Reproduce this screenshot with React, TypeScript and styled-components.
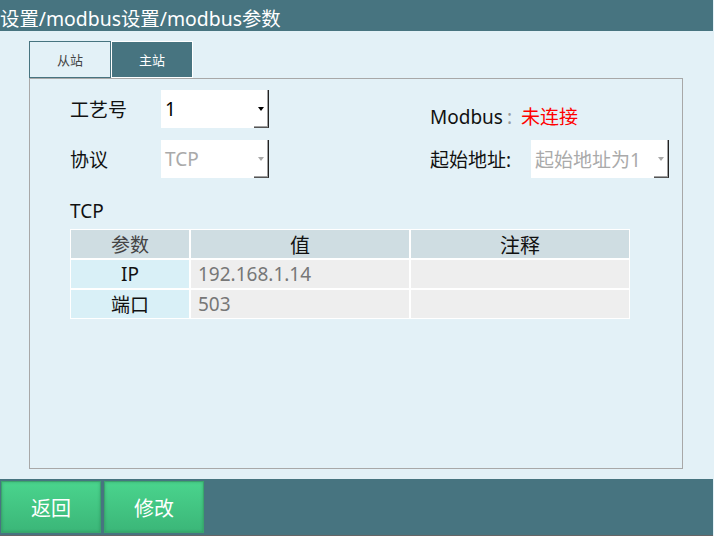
import React from "react";
import styled, { createGlobalStyle } from "styled-components";

const GlobalStyle = createGlobalStyle`
  html, body {
    margin: 0;
    padding: 0;
    background: #e3f1f7;
    font-family: "Noto Sans", "Noto Sans CJK SC", sans-serif;
  }
  * { box-sizing: border-box; }
`;

const TEAL = "#477480";

const Page = styled.div`
  width: 713px;
  height: 536px;
  display: flex;
  flex-direction: column;
`;

const TitleBar = styled.div`
  height: 31px;
  padding-top: 7px;
  background: ${TEAL};
  color: #fff;
  font-size: 19.4px;
  line-height: 24px;
  white-space: nowrap;
`;

const Content = styled.div`
  flex: 1;
  padding: 10px 30px 10px 29px;
  display: flex;
  flex-direction: column;
`;

const Tabs = styled.div`
  display: flex;
  height: 37px;
`;

const Tab = styled.div<{ $active?: boolean }>`
  width: 82px;
  height: 37px;
  display: flex;
  align-items: center;
  justify-content: center;
  font-size: 13px;
  border: 1px solid ${(p) => (p.$active ? "#ffffff" : TEAL)};
  background: ${(p) => (p.$active ? TEAL : "transparent")};
  color: ${(p) => (p.$active ? "#fff" : "#444")};
`;

const Panel = styled.div`
  height: 391px;
  border: 1px solid #a8a8a8;
  padding: 11px 0 0 40px;
`;

const TopSection = styled.div`
  display: flex;
`;

const Column = styled.div`
  display: flex;
  flex-direction: column;
  gap: 12px;
`;

const FormRow = styled.div`
  height: 38px;
  display: flex;
  align-items: center;
`;

const Label = styled.div<{ $width: number }>`
  width: ${(p) => p.$width}px;
  font-size: 19px;
  color: #111;
  white-space: nowrap;
`;

const StatusRow = styled.div`
  height: 38px;
  padding-top: 16px;
  font-size: 19px;
  line-height: 22px;
  color: #111;
  white-space: nowrap;
`;

const Colon = styled.span`
  color: #999;
  margin: 0 9px 0 4px;
`;

const Red = styled.span`
  color: #ff0000;
`;

const SelectBox = styled.div<{ $width: number }>`
  width: ${(p) => p.$width}px;
  height: 38px;
  background: #fff;
  display: flex;
`;

const SelectValue = styled.div<{ $disabled?: boolean }>`
  flex: 1;
  padding-left: 4px;
  display: flex;
  align-items: center;
  font-size: 19px;
  color: ${(p) => (p.$disabled ? "#aaaaaa" : "#000")};
  white-space: nowrap;
  overflow: hidden;
`;

const DropButton = styled.div<{ $disabled?: boolean }>`
  width: 15px;
  height: 100%;
  border-right: 1px solid #222;
  border-bottom: 1px solid #555;
  box-shadow: inset -1px -1px 0 #a0a0a0;
  display: flex;
  align-items: center;
  justify-content: center;
  padding-right: 1px;

  &::after {
    content: "";
    border-left: 3.5px solid transparent;
    border-right: 3.5px solid transparent;
    border-top: 4px solid ${(p) => (p.$disabled ? "#aaaaaa" : "#000")};
  }
`;

const RightColumn = styled(Column)`
  margin-left: 161px;
`;

const SectionTitle = styled.div`
  margin-top: 21px;
  font-size: 19px;
  line-height: 24px;
  color: #111;
`;

const Table = styled.div`
  margin-top: 6px;
  width: 560px;
  display: grid;
  grid-template-columns: 118px 218px 218px;
  grid-auto-rows: 28px;
  gap: 2px;
  padding: 1px;
  background: #fff;
`;

const HeadCell = styled.div<{ $dim?: boolean }>`
  background: #cfdde2;
  display: flex;
  align-items: center;
  justify-content: center;
  font-size: ${(p) => (p.$dim ? "19px" : "20px")};
  color: ${(p) => (p.$dim ? "#444" : "#111")};
`;

const KeyCell = styled.div`
  background: #d9f0f7;
  display: flex;
  align-items: center;
  justify-content: center;
  font-size: 19px;
  color: #111;
`;

const ValueCell = styled.div`
  background: #eeeeee;
  display: flex;
  align-items: center;
  padding-left: 7px;
  font-size: 19px;
  color: #777;
`;

const BottomBar = styled.div`
  height: 57px;
  background: ${TEAL};
  border-bottom: 1px solid #666;
  padding: 2px 0 0 1px;
  display: flex;
  gap: 3px;
`;

const ActionButton = styled.button`
  width: 100px;
  height: 52px;
  border: 1px solid #3aa56c;
  background: linear-gradient(#4ad48d, #3bb678);
  box-shadow: inset 0 0 3px rgba(0, 60, 30, 0.25);
  color: #fff;
  font-family: inherit;
  font-size: 20px;
  cursor: pointer;
  padding: 0;
`;

interface SelectProps {
  width: number;
  value: string;
  disabled?: boolean;
}

function Select({ width, value, disabled }: SelectProps) {
  return (
    <SelectBox $width={width}>
      <SelectValue $disabled={disabled}>{value}</SelectValue>
      <DropButton $disabled={disabled} />
    </SelectBox>
  );
}

const rows = [
  { key: "IP", value: "192.168.1.14", note: "" },
  { key: "端口", value: "503", note: "" },
];

export default function App() {
  return (
    <Page>
      <GlobalStyle />
      <TitleBar>设置/modbus设置/modbus参数</TitleBar>
      <Content>
        <Tabs>
          <Tab>从站</Tab>
          <Tab $active>主站</Tab>
        </Tabs>
        <Panel>
          <TopSection>
            <Column>
              <FormRow>
                <Label $width={91}>工艺号</Label>
                <Select width={108} value="1" />
              </FormRow>
              <FormRow>
                <Label $width={91}>协议</Label>
                <Select width={108} value="TCP" disabled />
              </FormRow>
            </Column>
            <RightColumn>
              <StatusRow>
                Modbus<Colon>:</Colon>
                <Red>未连接</Red>
              </StatusRow>
              <FormRow>
                <Label $width={101}>起始地址:</Label>
                <Select width={138} value="起始地址为1" disabled />
              </FormRow>
            </RightColumn>
          </TopSection>
          <SectionTitle>TCP</SectionTitle>
          <Table>
            <HeadCell $dim>参数</HeadCell>
            <HeadCell>值</HeadCell>
            <HeadCell>注释</HeadCell>
            {rows.map((row) => (
              <React.Fragment key={row.key}>
                <KeyCell>{row.key}</KeyCell>
                <ValueCell>{row.value}</ValueCell>
                <ValueCell>{row.note}</ValueCell>
              </React.Fragment>
            ))}
          </Table>
        </Panel>
      </Content>
      <BottomBar>
        <ActionButton>返回</ActionButton>
        <ActionButton>修改</ActionButton>
      </BottomBar>
    </Page>
  );
}
